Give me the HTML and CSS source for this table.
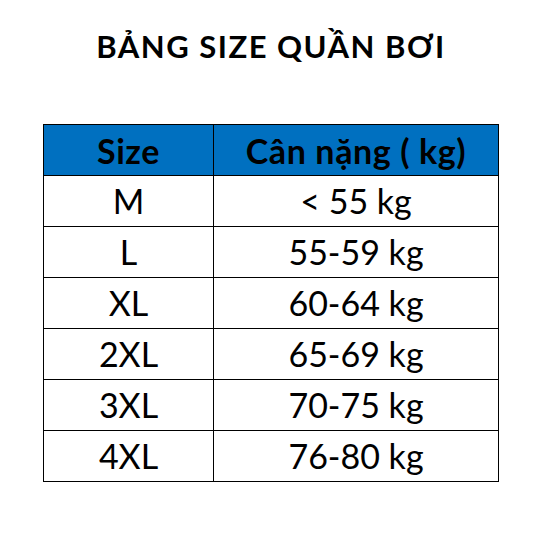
FILE: index.html
```html
<!DOCTYPE html>
<html lang="vi">
<head>
<meta charset="utf-8">
<title>Bảng size quần bơi</title>
<link rel="stylesheet" href="styles.css">
</head>
<body>
<main class="sheet">
  <h1 class="title">BẢNG SIZE QUẦN BƠI</h1>
  <div class="grid">
    <div class="cell head">Size</div>
    <div class="cell head">Cân nặng ( kg)</div>
    <div class="cell">M</div>
    <div class="cell">&lt; 55 kg</div>
    <div class="cell">L</div>
    <div class="cell">55-59 kg</div>
    <div class="cell">XL</div>
    <div class="cell">60-64 kg</div>
    <div class="cell">2XL</div>
    <div class="cell">65-69 kg</div>
    <div class="cell">3XL</div>
    <div class="cell">70-75 kg</div>
    <div class="cell">4XL</div>
    <div class="cell">76-80 kg</div>
  </div>
</main>
</body>
</html>
```

FILE: styles.css
```css
html, body {
  margin: 0;
  padding: 0;
  background: #ffffff;
}

body {
  font-family: "Lato", "Open Sans", sans-serif;
  color: #000000;
}

.sheet {
  width: 456px;
  margin-left: 43px;
  padding-top: 29px;
}

.title {
  margin: 0;
  font-size: 31px;
  line-height: 34px;
  font-weight: 700;
  letter-spacing: 1.5px;
  text-align: center;
}

.grid {
  margin-top: 61px;
  display: grid;
  grid-template-columns: 169px 284px;
  grid-auto-rows: 50px;
  gap: 1px;
  padding: 1px;
  background: #000000;
}

.cell {
  background: #ffffff;
  display: flex;
  align-items: center;
  justify-content: center;
  padding-bottom: 2px;
  box-sizing: border-box;
  font-size: 34px;
  white-space: nowrap;
}

.cell.head {
  background: #0070c0;
  font-weight: 700;
  font-size: 34px;
  letter-spacing: 0.6px;
  padding-bottom: 0;
  padding-top: 0;
}
```
